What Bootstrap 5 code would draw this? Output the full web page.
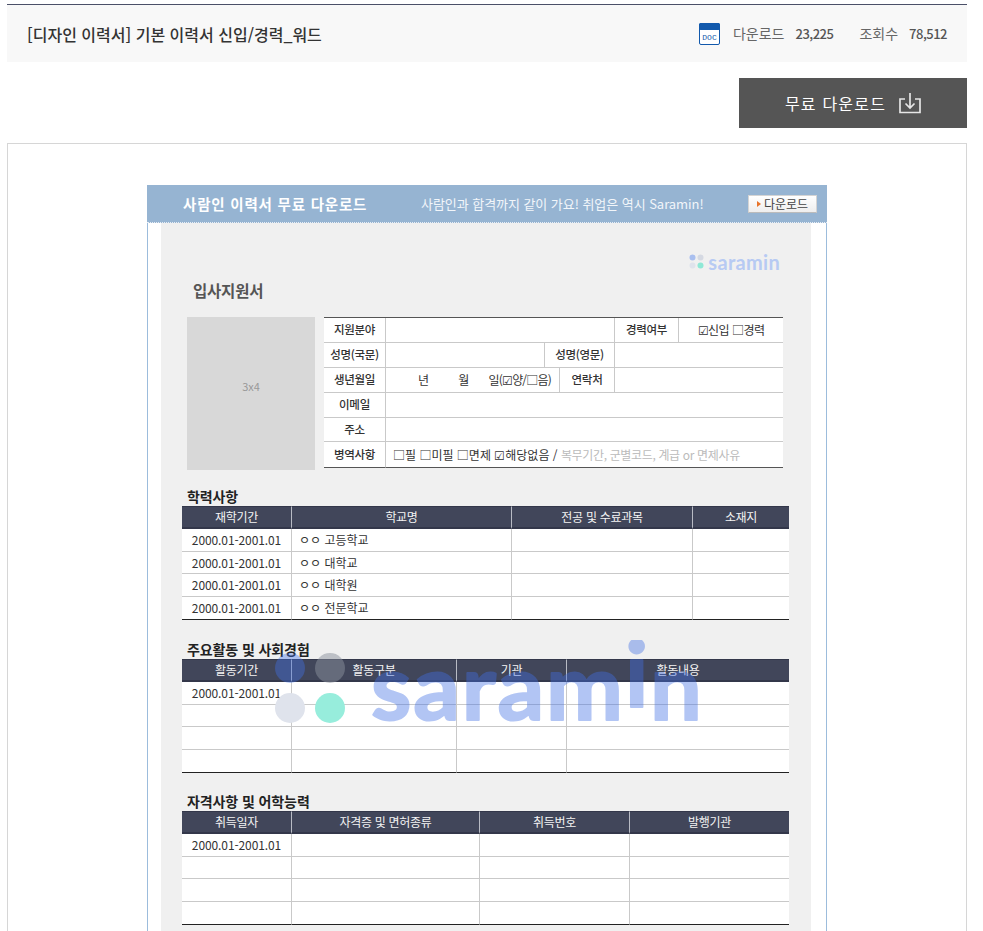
<!DOCTYPE html>
<html lang="ko">
<head>
<meta charset="utf-8">
<title>기본 이력서</title>
<link href="https://cdn.jsdelivr.net/npm/bootstrap@5.3.0/dist/css/bootstrap.min.css" rel="stylesheet">
<style>
html,body{height:931px;overflow:hidden;background:#fff}
body{font-family:"Noto Sans CJK KR","Noto Sans",sans-serif;color:#333;padding:4px 16px 0 7px}
.topband{height:58px;background:#f8f8f8;border-top:1px solid #4b5068;padding:0 20px}
.docname{font-size:16px;letter-spacing:0;color:#333;font-weight:500}
.statlab{font-size:14px;color:#666;margin-left:13px}
.statnum{font-size:13px;color:#555;font-weight:500;letter-spacing:-.5px;margin-left:11px}
.statgap{margin-right:13px}
.dlbtn{width:228px;height:50px;background:#555;border-radius:0;color:#fff;font-size:16px;letter-spacing:1.2px;border:0;margin-top:16px;gap:13px}
.dlbtn:hover{background:#555;color:#fff}
.viewer{margin-top:15px;border:1px solid #d6d6d6;border-bottom:0;height:800px;padding:41px 139px 0}
.sheet{width:680px;height:760px;border-left:1px solid #9cbcdc;border-right:1px solid #9cbcdc}
.sheetband{margin:0 -1px;width:680px;height:38px;background:#96b4d2;border-bottom:1px dotted #e8eef5;color:#fff;padding:0 10px 0 36px}
.bandtitle{font-size:14.5px;font-weight:700;width:238px;letter-spacing:.8px;white-space:nowrap}
.bandsub{font-size:13px;width:327px;letter-spacing:-.05px;color:#f2f6fa;white-space:nowrap}
.bandbtn{width:69px;height:18px;background:linear-gradient(#fff,#eee);border:1px solid #d4d4d4;border-bottom-color:#bbb;font-size:12px;line-height:15px;color:#444;gap:3px}
.tri{width:0;height:0;border-left:4px solid #e8742a;border-top:3px solid transparent;border-bottom:3px solid transparent}
.paper{position:relative;margin:0 13px;width:650px;height:720px;background:#f0f0f0;overflow:hidden}
.minilogo{height:50px;padding:27px 31px 0 0}
.papertitle{font-size:15.5px;font-weight:700;color:#555;margin:6px 0 16px 32px;line-height:22px;height:22px;letter-spacing:-.2px}
.formrow{padding-left:26px;height:153px;gap:9px}
.photo{width:128px;height:153px;background:#d8d8d8;color:#999;font-size:11px;padding-bottom:14px}
.grid{border-collapse:separate;border-spacing:0;table-layout:fixed;background:#fff;font-size:12px;color:#333}
.grid td,.grid th{padding:0;border-bottom:1px solid #c9c9c9;border-right:1px solid #c9c9c9;text-align:center;white-space:nowrap;overflow:hidden;line-height:1}
.grid td:last-child,.grid th:last-child{border-right:0}
.f1{width:459px;border-top:1px solid #555}
.f1 tr{height:25px}
.f1 tr:nth-child(5){height:24px}
.f1 tr:last-child{height:26px}
.f1 tr:last-child td{border-bottom:1px solid #555}
.f1 .lab{font-weight:500;font-size:11.5px;letter-spacing:-.3px}
.tleft{text-align:left!important;padding-left:7px!important}
.tright{text-align:right!important;padding-right:8px!important;letter-spacing:-.8px}
.hint{color:#bbb;letter-spacing:-.35px}
.tight{letter-spacing:-.5px}
.ymd{margin-right:30px}
.ymd2{margin-right:20px}
.sect{margin-left:21px;width:607px}
.secttitle{font-size:14px;font-weight:700;color:#222;line-height:14px;height:17px;padding-left:5px;letter-spacing:-.1px}
.s1{margin-top:19px}.s2{margin-top:22px}.s3{margin-top:21px}
.tb{width:607px}
.tb tr{height:23px}
.tb tbody tr:nth-child(2){height:22px}
.tb th{background:#41465a;color:#f4f4f4;font-weight:400;letter-spacing:-.3px;border-top:1px solid #33374a;border-bottom:2px solid #33374a;border-right:1px solid #b8bbc4}
.tb tbody tr:last-child td{border-bottom:1px solid #222}
.tb td.per{text-align:center;color:#333;letter-spacing:-.1px}
.watermark{position:absolute;left:114px;top:417px;pointer-events:none}
.wmtext{font-family:"Lato","Open Sans",sans-serif;font-weight:700;font-size:92px}
.mlogotext{font-family:"Lato","Open Sans",sans-serif;font-weight:700;font-size:20px;color:#b7caf3;line-height:20px;letter-spacing:.3px}
</style>
</head>
<body>
<div class="topband d-flex align-items-center justify-content-between">
  <div class="docname">[디자인 이력서] 기본 이력서 신입/경력_워드</div>
  <div class="d-flex align-items-center">
    <svg width="21" height="22" viewBox="0 0 21 22" aria-hidden="true"><rect x=".5" y=".5" width="20" height="21" rx="1.5" fill="#fff" stroke="#1259ac"/><rect x="0" y="0" width="21" height="7" rx="1.5" fill="#1259ac"/><text x="10.5" y="16.500" text-anchor="middle" font-size="8" font-family="Liberation Mono,monospace" fill="#1259ac">DOC</text></svg>
    <span class="statlab">다운로드</span><span class="statnum statgap">23,225</span>
    <span class="statlab">조회수</span><span class="statnum">78,512</span>
  </div>
</div>
<div class="d-flex justify-content-end">
  <a class="btn dlbtn d-flex align-items-center justify-content-center" href="#">무료 다운로드
    <svg width="22" height="22" viewBox="0 0 22 22" aria-hidden="true" fill="none" stroke="#e6e6e6" stroke-width="1.7"><path d="M6 7H1v13.500h20V7h-5"/><path d="M11 1v15M6.500 11.500 11 16l4.500-4.500"/></svg>
  </a>
</div>
<div class="viewer">
  <div class="sheet">
    <div class="sheetband d-flex align-items-center">
      <div class="bandtitle">사람인 이력서 무료 다운로드</div>
      <div class="bandsub">사람인과 합격까지 같이 가요! 취업은 역시 Saramin!</div>
      <div class="bandbtn d-flex align-items-center justify-content-center"><span class="tri"></span>다운로드</div>
    </div>
    <div class="paper">
      <div class="minilogo d-flex justify-content-end align-items-center gap-1">
        <svg width="15" height="16" viewBox="0 0 15 16" aria-hidden="true"><circle cx="3.500" cy="3.500" r="3" fill="#a9bfef"/><circle cx="11.500" cy="3.500" r="3" fill="#d5d9e2"/><circle cx="3.500" cy="11.500" r="3" fill="#dfe3ec"/><circle cx="11.500" cy="11.500" r="3" fill="#8fe8d6"/></svg>
        <span class="mlogotext">saramin</span>
      </div>
      <div class="papertitle">입사지원서</div>
      <div class="formrow d-flex align-items-start">
        <div class="photo d-flex align-items-center justify-content-center">3x4</div>
        <table class="grid f1">
          <colgroup><col style="width:62px"><col style="width:159px"><col style="width:15px"><col style="width:55px"><col style="width:64px"><col style="width:104px"></colgroup>
          <tr><td class="lab">지원분야</td><td colspan="3"></td><td class="lab">경력여부</td><td class="tight">☑신입 □경력</td></tr>
          <tr><td class="lab">성명(국문)</td><td></td><td colspan="2" class="lab">성명(영문)</td><td colspan="2"></td></tr>
          <tr><td class="lab">생년월일</td><td colspan="2" class="tright"><span class="ymd">년</span><span class="ymd2">월</span>일(☑양/□음)</td><td class="lab">연락처</td><td colspan="2"></td></tr>
          <tr><td class="lab">이메일</td><td colspan="5"></td></tr>
          <tr><td class="lab">주소</td><td colspan="5"></td></tr>
          <tr><td class="lab">병역사항</td><td colspan="5" class="tleft">□필 □미필 □면제 ☑해당없음 / <span class="hint">복무기간, 군별코드, 계급 or 면제사유</span></td></tr>
        </table>
      </div>
      <div class="sect s1">
        <div class="secttitle">학력사항</div>
        <table class="grid tb">
          <colgroup><col style="width:110px"><col style="width:220px"><col style="width:181px"><col style="width:96px"></colgroup>
          <thead><tr><th>재학기간</th><th>학교명</th><th>전공 및 수료과목</th><th>소재지</th></tr></thead>
          <tbody>
            <tr><td class="per">2000.01-2001.01</td><td class="tleft">ㅇㅇ 고등학교</td><td></td><td></td></tr>
            <tr><td class="per">2000.01-2001.01</td><td class="tleft">ㅇㅇ 대학교</td><td></td><td></td></tr>
            <tr><td class="per">2000.01-2001.01</td><td class="tleft">ㅇㅇ 대학원</td><td></td><td></td></tr>
            <tr><td class="per">2000.01-2001.01</td><td class="tleft">ㅇㅇ 전문학교</td><td></td><td></td></tr>
          </tbody>
        </table>
      </div>
      <div class="sect s2">
        <div class="secttitle">주요활동 및 사회경험</div>
        <table class="grid tb">
          <colgroup><col style="width:110px"><col style="width:165px"><col style="width:110px"><col style="width:222px"></colgroup>
          <thead><tr><th>활동기간</th><th>활동구분</th><th>기관</th><th>활동내용</th></tr></thead>
          <tbody>
            <tr><td class="per">2000.01-2001.01</td><td></td><td></td><td></td></tr>
            <tr><td></td><td></td><td></td><td></td></tr>
            <tr><td></td><td></td><td></td><td></td></tr>
            <tr><td></td><td></td><td></td><td></td></tr>
          </tbody>
        </table>
      </div>
      <div class="sect s3">
        <div class="secttitle">자격사항 및 어학능력</div>
        <table class="grid tb">
          <colgroup><col style="width:110px"><col style="width:188px"><col style="width:150px"><col style="width:159px"></colgroup>
          <thead><tr><th>취득일자</th><th>자격증 및 면허종류</th><th>취득번호</th><th>발행기관</th></tr></thead>
          <tbody>
            <tr><td class="per">2000.01-2001.01</td><td></td><td></td><td></td></tr>
            <tr><td></td><td></td><td></td><td></td></tr>
            <tr><td></td><td></td><td></td><td></td></tr>
            <tr><td></td><td></td><td></td><td></td></tr>
          </tbody>
        </table>
      </div>
      <svg class="watermark" width="430" height="90" viewBox="0 0 430 90" aria-hidden="true">
        <ellipse cx="15" cy="28" rx="15" ry="15" fill="#4170e6" fill-opacity=".4"/>
        <ellipse cx="55" cy="28" rx="15" ry="15" fill="#8a8f9c" fill-opacity=".5"/>
        <ellipse cx="15" cy="68" rx="15" ry="15" fill="#dfe3ec"/>
        <ellipse cx="55" cy="68" rx="15" ry="15" fill="#97eddc"/>
        <g opacity=".4"><text class="wmtext" x="96" y="80" textLength="331" lengthAdjust="spacing" fill="#4170e6" stroke="#4170e6" stroke-width="2" stroke-linejoin="round">saram<tspan dy="-13">i</tspan><tspan dy="13">n</tspan></text></g>
      </svg>
    </div>
  </div>
</div>
</body>
</html>
